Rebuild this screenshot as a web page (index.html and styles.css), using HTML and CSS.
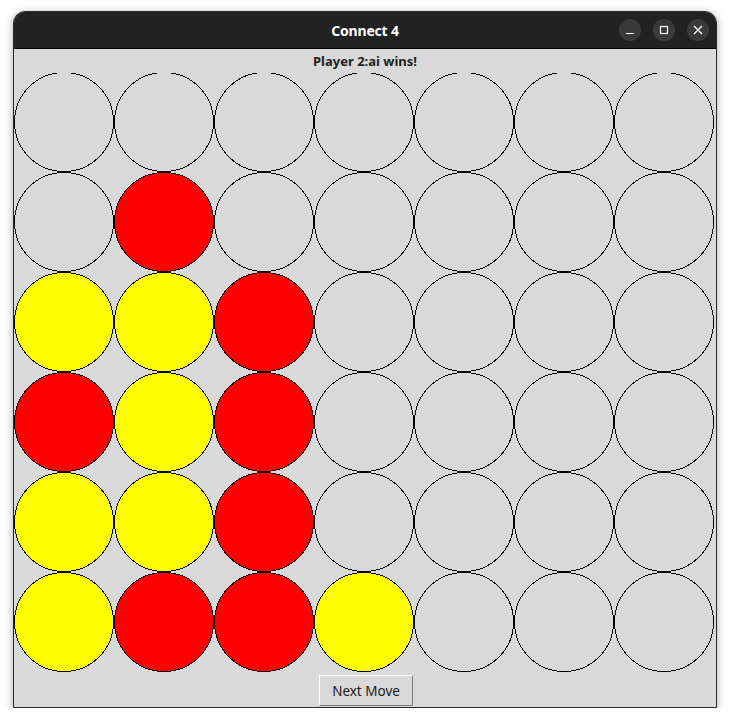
FILE: index.html
```html
<!DOCTYPE html>
<html>
<head>
<meta charset="utf-8">
<link rel="stylesheet" href="styles.css">
</head>
<body>
<div class="window">
  <div class="titlebar">
    <div class="title">Connect 4</div>
    <div class="controls">
      <div class="ctl"><svg width="10" height="10" viewBox="0 0 10 10"><line x1="1" y1="8.5" x2="9" y2="8.5" stroke="#fff" stroke-width="1.2"/></svg></div>
      <div class="ctl"><svg width="10" height="10" viewBox="0 0 10 10"><rect x="1.5" y="1.5" width="7" height="7" fill="none" stroke="#fff" stroke-width="1.2"/></svg></div>
      <div class="ctl"><svg width="10" height="10" viewBox="0 0 10 10"><path d="M1 1L9 9M9 1L1 9" stroke="#fff" stroke-width="1.3"/></svg></div>
    </div>
  </div>
  <div class="content">
    <div class="status">Player 2:ai wins!</div>
    <svg class="board" width="700" height="599" viewBox="0 1 700 599" shape-rendering="crispEdges">
      <g stroke="#000" stroke-width="1">
        <circle cx="50" cy="50" r="49.5" fill="#d9d9d9"/>
        <circle cx="150" cy="50" r="49.5" fill="#d9d9d9"/>
        <circle cx="250" cy="50" r="49.5" fill="#d9d9d9"/>
        <circle cx="350" cy="50" r="49.5" fill="#d9d9d9"/>
        <circle cx="450" cy="50" r="49.5" fill="#d9d9d9"/>
        <circle cx="550" cy="50" r="49.5" fill="#d9d9d9"/>
        <circle cx="650" cy="50" r="49.5" fill="#d9d9d9"/>

        <circle cx="50" cy="150" r="49.5" fill="#d9d9d9"/>
        <circle cx="150" cy="150" r="49.5" fill="#ff0000"/>
        <circle cx="250" cy="150" r="49.5" fill="#d9d9d9"/>
        <circle cx="350" cy="150" r="49.5" fill="#d9d9d9"/>
        <circle cx="450" cy="150" r="49.5" fill="#d9d9d9"/>
        <circle cx="550" cy="150" r="49.5" fill="#d9d9d9"/>
        <circle cx="650" cy="150" r="49.5" fill="#d9d9d9"/>

        <circle cx="50" cy="250" r="49.5" fill="#ffff00"/>
        <circle cx="150" cy="250" r="49.5" fill="#ffff00"/>
        <circle cx="250" cy="250" r="49.5" fill="#ff0000"/>
        <circle cx="350" cy="250" r="49.5" fill="#d9d9d9"/>
        <circle cx="450" cy="250" r="49.5" fill="#d9d9d9"/>
        <circle cx="550" cy="250" r="49.5" fill="#d9d9d9"/>
        <circle cx="650" cy="250" r="49.5" fill="#d9d9d9"/>

        <circle cx="50" cy="350" r="49.5" fill="#ff0000"/>
        <circle cx="150" cy="350" r="49.5" fill="#ffff00"/>
        <circle cx="250" cy="350" r="49.5" fill="#ff0000"/>
        <circle cx="350" cy="350" r="49.5" fill="#d9d9d9"/>
        <circle cx="450" cy="350" r="49.5" fill="#d9d9d9"/>
        <circle cx="550" cy="350" r="49.5" fill="#d9d9d9"/>
        <circle cx="650" cy="350" r="49.5" fill="#d9d9d9"/>

        <circle cx="50" cy="450" r="49.5" fill="#ffff00"/>
        <circle cx="150" cy="450" r="49.5" fill="#ffff00"/>
        <circle cx="250" cy="450" r="49.5" fill="#ff0000"/>
        <circle cx="350" cy="450" r="49.5" fill="#d9d9d9"/>
        <circle cx="450" cy="450" r="49.5" fill="#d9d9d9"/>
        <circle cx="550" cy="450" r="49.5" fill="#d9d9d9"/>
        <circle cx="650" cy="450" r="49.5" fill="#d9d9d9"/>

        <circle cx="50" cy="550" r="49.5" fill="#ffff00"/>
        <circle cx="150" cy="550" r="49.5" fill="#ff0000"/>
        <circle cx="250" cy="550" r="49.5" fill="#ff0000"/>
        <circle cx="350" cy="550" r="49.5" fill="#ffff00"/>
        <circle cx="450" cy="550" r="49.5" fill="#d9d9d9"/>
        <circle cx="550" cy="550" r="49.5" fill="#d9d9d9"/>
        <circle cx="650" cy="550" r="49.5" fill="#d9d9d9"/>
      </g>
    </svg>
    <div class="actions">
      <button class="btn">Next Move</button>
    </div>
  </div>
</div>
</body>
</html>
```

FILE: styles.css
```css
html, body {
  margin: 0;
  padding: 0;
  background: #ffffff;
}
body {
  padding: 11px 0 0 13px;
  font-family: "Noto Sans", "DejaVu Sans", sans-serif;
}
.window {
  width: 702px;
  border: 1px solid #2a2a2a;
  border-radius: 12px 12px 0 0;
  box-shadow: 0 2px 8px rgba(0, 0, 0, 0.35);
  overflow: hidden;
  background: #d9d9d9;
}
.titlebar {
  height: 36px;
  background: #222222;
  border-bottom: 1px solid #000;
  display: flex;
  align-items: center;
  justify-content: center;
  position: relative;
}
.title {
  color: #ffffff;
  font-weight: bold;
  font-size: 14px;
  letter-spacing: -0.2px;
}
.controls {
  position: absolute;
  right: 7px;
  top: 7px;
  display: flex;
  gap: 12px;
}
.ctl {
  width: 22px;
  height: 22px;
  border-radius: 50%;
  background: #3a3a3a;
  display: flex;
  align-items: center;
  justify-content: center;
}
.content {
  height: 658px;
  display: flex;
  flex-direction: column;
}
.status {
  height: 24px;
  line-height: 24px;
  text-align: center;
  font-size: 13px;
  font-weight: bold;
  color: #222;
}
.board {
  display: block;
  flex: none;
}
.actions {
  display: flex;
  justify-content: center;
  padding-top: 3px;
}
.btn {
  width: 94px;
  height: 31px;
  background: #d9d9d9;
  border: 1px solid;
  border-color: #ffffff #7a7a7a #7a7a7a #ffffff;
  font-family: "Noto Sans", "DejaVu Sans", sans-serif;
  font-size: 13.5px;
  color: #1a1a1a;
  padding: 0;
  margin-left: 2px;
}
```
